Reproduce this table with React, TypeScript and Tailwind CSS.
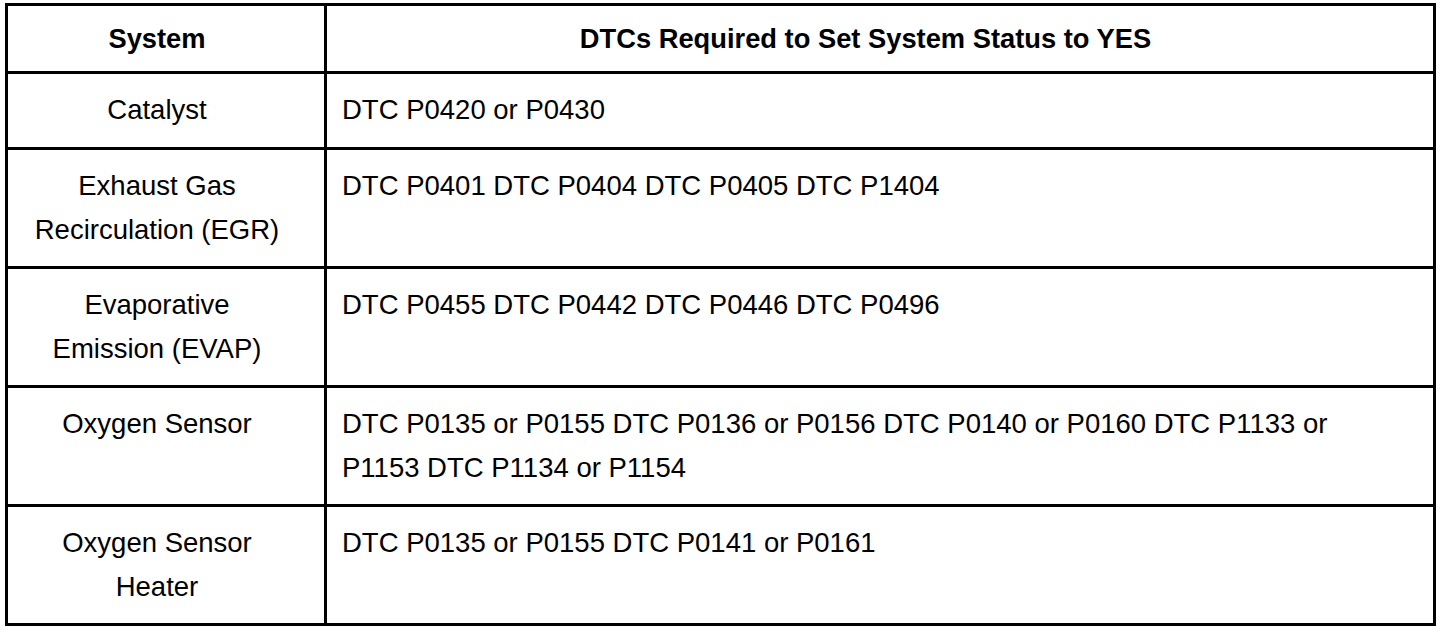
const rows: { system: string[]; dtcs: string }[] = [
  { system: ["Catalyst"], dtcs: "DTC P0420 or P0430" },
  {
    system: ["Exhaust Gas", "Recirculation (EGR)"],
    dtcs: "DTC P0401 DTC P0404 DTC P0405 DTC P1404",
  },
  {
    system: ["Evaporative", "Emission (EVAP)"],
    dtcs: "DTC P0455 DTC P0442 DTC P0446 DTC P0496",
  },
  {
    system: ["Oxygen Sensor"],
    dtcs: "DTC P0135 or P0155 DTC P0136 or P0156 DTC P0140 or P0160 DTC P1133 or P1153 DTC P1134 or P1154",
  },
  {
    system: ["Oxygen Sensor", "Heater"],
    dtcs: "DTC P0135 or P0155 DTC P0141 or P0161",
  },
];

export default function App() {
  return (
    <div className="min-h-[632px] bg-white pt-[3px] pl-[5px] text-black font-['Liberation_Sans',Arial,sans-serif]">
      <div className="grid w-[1431px] grid-cols-[319px_1109px] border-t-[3px] border-l-[3px] border-black">
        {/* Header */}
        <div className="border-r-[3px] border-b-[3px] border-black py-[14px] pl-[20px] pr-[38px] text-center text-[27.3px] font-bold leading-[37px]">
          System
        </div>
        <div className="border-r-[3px] border-b-[3px] border-black py-[14px] pl-[15px] pr-[44px] text-center text-[27.3px] font-bold leading-[37px]">
          DTCs Required to Set System Status to YES
        </div>

        {/* Body */}
        {rows.map((row, i) => (
          <div key={i} className="contents">
            <div
              className={
                i === 0
                  ? "border-r-[3px] border-b-[3px] border-black pt-[14px] pb-[15px] pl-[20px] pr-[38px] text-center text-[27.5px] leading-[44px]"
                  : "border-r-[3px] border-b-[3px] border-black py-[14px] pl-[20px] pr-[38px] text-center text-[27.5px] leading-[44px]"
              }
            >
              {row.system.map((line, j) => (
                <div key={j}>{line}</div>
              ))}
            </div>
            <div
              className={
                i === 0
                  ? "border-r-[3px] border-b-[3px] border-black pt-[14px] pb-[15px] pl-[15px] pr-[30px] text-[27.5px] leading-[44px]"
                  : "border-r-[3px] border-b-[3px] border-black py-[14px] pl-[15px] pr-[30px] text-[27.5px] leading-[44px]"
              }
            >
              {row.dtcs}
            </div>
          </div>
        ))}
      </div>
    </div>
  );
}
